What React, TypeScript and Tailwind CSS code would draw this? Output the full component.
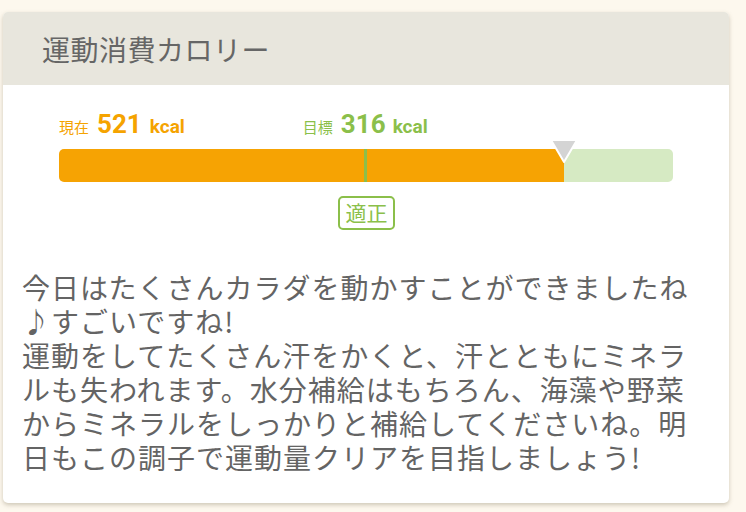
import React from "react";

const jp = "font-['Noto_Sans_CJK_JP',sans-serif]";
const num = "font-['Roboto','Noto_Sans_CJK_JP',sans-serif]";

export default function App() {
  const current = 521;
  const target = 316;

  return (
    <div className={`min-h-[512px] bg-[#fdf8ee] pl-[3px] pt-[12px] ${jp}`}>
      <div className="w-[726px] overflow-hidden rounded-[5px] bg-white shadow-[0_2px_4px_rgba(120,110,80,0.35)]">
        {/* ヘッダー */}
        <div className="flex h-[73px] items-center bg-[#e8e6dd] pl-[39px]">
          <h1 className="text-[28px] leading-none tracking-[0.5px] text-[#666]">
            運動消費カロリー
          </h1>
        </div>

        <div className="px-[56px] pt-[26px]">
          {/* 現在 / 目標 */}
          <div className="flex items-baseline">
            <div className="flex items-baseline text-[#f5a300]">
              <span className="text-[15px]">現在</span>
              <span className={`ml-[8px] text-[26px] font-bold leading-none ${num}`}>{current}</span>
              <span className={`ml-[8px] text-[19px] font-bold ${num}`}>kcal</span>
            </div>
            <div className="ml-[118px] flex items-baseline text-[#8bbf4a]">
              <span className="text-[15px]">目標</span>
              <span className={`ml-[8px] text-[26px] font-bold leading-none ${num}`}>{target}</span>
              <span className={`ml-[7px] text-[19px] font-bold ${num}`}>kcal</span>
            </div>
          </div>

          {/* バー */}
          <div className="relative mt-[7px] flex h-[33px] w-[614px]">
            <div className="h-full w-[505px] rounded-l-[5px] bg-[#f6a303]" />
            <div className="h-full flex-1 rounded-r-[5px] bg-[#d6eac3]" />
            <div className="absolute left-[305px] top-0 h-full w-[3px] bg-[#8bbf4a]" />
            <svg
              className="absolute left-[490px] top-[-10px]"
              width="30"
              height="26"
              viewBox="0 0 30 26"
            >
              <polygon
                points="2,1 28,1 15,23"
                fill="#d4d4d4"
                stroke="#ffffff"
                strokeWidth="2"
                strokeLinejoin="round"
              />
            </svg>
          </div>

          {/* 判定 */}
          <div className="mt-[14px] flex pl-[279px]">
            <span className="box-border flex h-[34px] w-[57px] items-center justify-center rounded-[5px] border-2 border-[#8bbf4a] text-[21px] leading-none text-[#8bbf4a]">
              適正
            </span>
          </div>
        </div>

        {/* メッセージ */}
        <p className="pl-[19px] pr-[32px] pb-[29px] pt-[40px] text-[28px] leading-[34px] tracking-[1px] text-[#646464]">
          今日はたくさんカラダを動かすことができましたね♪すごいですね!
          <br />
          運動をしてたくさん汗をかくと、汗とともにミネラルも失われます。水分補給はもちろん、海藻や野菜からミネラルをしっかりと補給してくださいね。明日もこの調子で運動量クリアを目指しましょう!
        </p>
      </div>
    </div>
  );
}
